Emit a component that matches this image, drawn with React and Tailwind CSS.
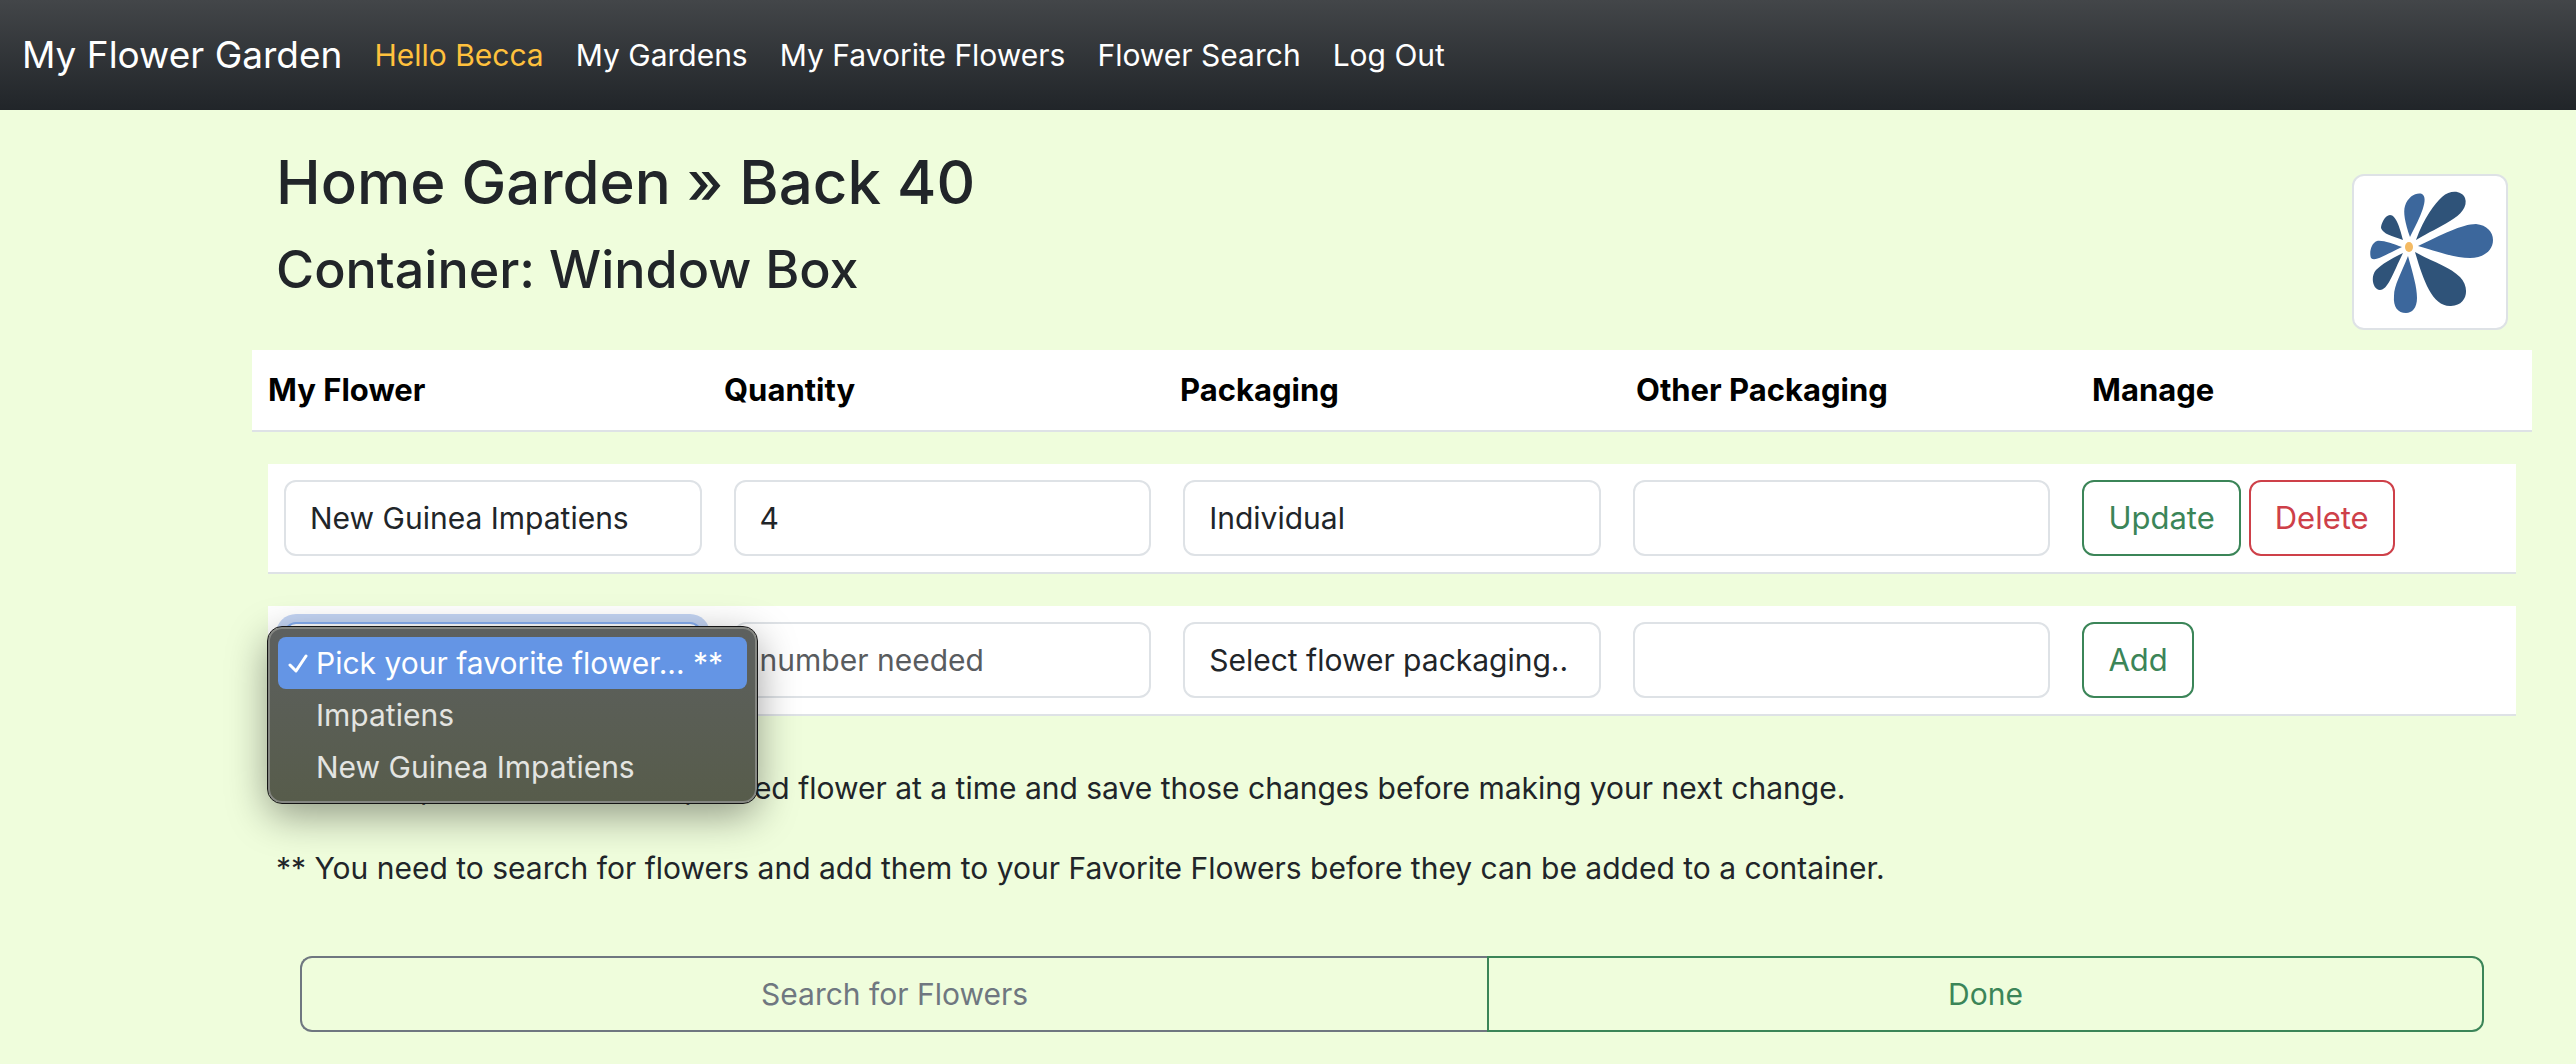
const FLOWERS = ["Pick your favorite flower... **", "Impatiens", "New Guinea Impatiens"];
const LINKS = ["My Gardens", "My Favorite Flowers", "Flower Search", "Log Out"];
const COLUMNS = ["My Flower", "Quantity", "Packaging", "Other Packaging", "Manage"];

const field =
  "block h-[76px] w-full appearance-none overflow-hidden rounded-xl border-2 border-[#dee2e6] bg-white px-6 text-[#212529] outline-none";
const row = "mx-4 mt-8 grid grid-cols-5 border-b-2 border-[#dee2e6] bg-white py-4";
const outline = "h-[76px] rounded-xl border-2 px-6 text-[31px]";

function FlowerLogo() {
  return (
    <svg viewBox="0 0 152 152" className="block size-[152px]" role="img" aria-label="Flower">
      <g fill="#3c679c">
        <path d="M56 61C51 47 49 36 51 30C54 20 63 16 68 18C75 22 67 40 56 61Z" />
        <path d="M64 70C87 59 108 48 122 48C133 49 139 56 139 64C139 75 129 82 116 82C103 82 87 77 64 70Z" />
        <path d="M54 80C59 98 63 111 63 122C63 132 58 137 52 137C44 137 39 131 40 120C40 109 47 98 54 80Z" />
        <path d="M48 71C39 68 29 64 23 65C17 67 15 77 17 82C21 86 31 79 48 71Z" />
      </g>
      <g fill="#2f5379">
        <path d="M62 64C70 42 81 27 88 21C97 13 108 15 111 22C114 30 107 39 96 45C85 52 75 56 62 64Z" />
        <path d="M61 76C77 85 96 91 106 101C116 111 114 129 97 130C78 131 69 103 61 76Z" />
        <path d="M49 77C40 81 28 88 22 94C16 101 19 114 26 114C34 114 39 97 49 77Z" />
        <path d="M49 64C46 52 42 39 36 39C31 39 27 48 27 52C29 58 38 60 49 64Z" />
      </g>
      <ellipse cx="55" cy="71" rx="4" ry="5" fill="#f4ba63" />
    </svg>
  );
}

export default function App() {
  return (
    <div className="min-h-screen bg-[#effddc] pb-8 font-['Inter','Liberation_Sans',sans-serif] text-[30px] leading-[48px] text-[#212529]">
      <nav className="flex h-[110px] items-center gap-8 bg-linear-to-b from-[#434649] to-[#212529] px-[22px] text-white">
        <a href="#home" className="text-[37px]">My Flower Garden</a>
        <span className="text-[#ffc13d]">Hello Becca</span>
        {LINKS.map((label) => (
          <a key={label} href="#nav">{label}</a>
        ))}
      </nav>

      <main className="mr-11 ml-[252px]">
        <header className="flex justify-between px-6">
          <div className="pt-8 font-medium">
            <h1 className="text-[60px] leading-[80px]">Home Garden » Back 40</h1>
            <h2 className="mt-4 text-[52px] leading-[64px]">Container: Window Box</h2>
          </div>
          <div className="mt-16 size-[156px] rounded-xl border-2 border-[#dee2e6] bg-white">
            <FlowerLogo />
          </div>
        </header>

        <div className="mt-5 grid grid-cols-5 border-b-2 border-[#dee2e6] bg-white py-4 text-[31px] font-bold text-black">
          {COLUMNS.map((name) => (
            <div key={name} className="px-4">{name}</div>
          ))}
        </div>

        <form className={row} onSubmit={(e) => e.preventDefault()}>
          <div className="px-4">
            <input aria-label="My Flower" className={field} defaultValue="New Guinea Impatiens" />
          </div>
          <div className="px-4">
            <input aria-label="Quantity" className={field} defaultValue="4" />
          </div>
          <div className="px-4">
            <select aria-label="Packaging" className={field}>
              <option>Individual</option>
            </select>
          </div>
          <div className="px-4">
            <input aria-label="Other Packaging" className={field} />
          </div>
          <div className="flex gap-2 px-4">
            <button className={`${outline} border-[#3b8558] text-[#3b8558]`}>Update</button>
            <button type="button" className={`${outline} border-[#ce4049] text-[#ce4049]`}>Delete</button>
          </div>
        </form>

        <form className={row} onSubmit={(e) => e.preventDefault()}>
          <div className="relative px-4">
            <select
              aria-label="Favorite flower"
              className="block h-[76px] w-full appearance-none rounded-xl border-2 border-[#86aef0] bg-white px-6 ring-8 ring-[#c3d4f3] outline-none"
            >
              {FLOWERS.map((name) => (
                <option key={name}>{name}</option>
              ))}
            </select>
            <ul
              role="listbox"
              aria-label="Favorite flower choices"
              className="absolute top-[5px] left-0 z-10 w-max rounded-[14px] border-2 border-[#858782] bg-linear-to-b from-[#5d605f] to-[#575c4b] p-2 text-[#e3e4e1] shadow-[0_12px_40px_rgba(0,0,0,0.4)] outline outline-[#151515]"
            >
              {FLOWERS.map((name, i) => (
                <li
                  key={name}
                  role="option"
                  aria-selected={i === 0}
                  className="flex h-[52px] items-center gap-2 rounded-lg pr-6 pl-2.5 aria-selected:bg-[#6495e5] aria-selected:text-white"
                >
                  <svg viewBox="0 0 20 20" className="size-5" fill="none" stroke="currentColor" strokeWidth="3" strokeLinecap="round" strokeLinejoin="round">
                    {i === 0 && <path d="M2 12L8 18L18 3" />}
                  </svg>
                  {name}
                </li>
              ))}
            </ul>
          </div>
          <div className="px-4">
            <input aria-label="Quantity" className={`${field} placeholder:text-[#595c5f]`} placeholder="number needed" />
          </div>
          <div className="px-4">
            <select aria-label="Packaging" className={field}>
              <option>Select flower packaging..</option>
            </select>
          </div>
          <div className="px-4">
            <input aria-label="Other Packaging" className={field} />
          </div>
          <div className="px-4">
            <button className={`${outline} border-[#3b8558] text-[#3b8558]`}>Add</button>
          </div>
        </form>

        <div className="mt-12 px-6">
          <p>* Please update at most one planted flower at a time and save those changes before making your next change.</p>
          <p className="mt-8">** You need to search for flowers and add them to your Favorite Flowers before they can be added to a container.</p>
        </div>

        <div className="mx-12 mt-16 flex">
          <button className="h-[76px] grow rounded-l-xl border-2 border-r-0 border-[#6f7780] px-6 text-[#6f7780]">Search for Flowers</button>
          <button className="h-[76px] grow rounded-r-xl border-2 border-[#3b8558] px-6 text-[#3b8558]">Done</button>
        </div>
      </main>
    </div>
  );
}
